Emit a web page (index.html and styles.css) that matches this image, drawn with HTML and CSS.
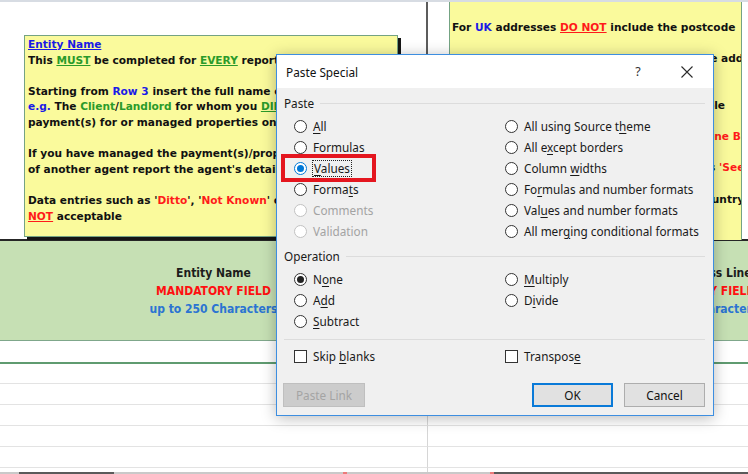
FILE: index.html
```html
<!DOCTYPE html>
<html>
<head>
<meta charset="utf-8">
<title>Paste Special</title>
<link rel="stylesheet" href="styles.css">
</head>
<body>
<div class="screen">
  <div class="topline"></div>
  <div class="sheet">
    <div class="cell left top"></div>
    <div class="cell right top"></div>

    <div class="cell left head">
      <div class="h-title">Entity Name</div>
      <div class="h-mand">MANDATORY FIELD</div>
      <div class="h-len">up to 250 Characters</div>
    </div>
    <div class="cell right head">
      <div class="h-title">Entity Address Line 1</div>
      <div class="h-mand">MANDATORY FIELD</div>
      <div class="h-len">up to 35 Characters</div>
    </div>

    <div class="cell left first"></div><div class="cell right first"></div>
    <div class="cell left r20"></div><div class="cell right r20"></div>
    <div class="cell left r21"></div><div class="cell right r21"></div>
    <div class="cell left r21"></div><div class="cell right r21"></div>
    <div class="cell left r21"></div><div class="cell right r21"></div>
    <div class="cell left r21"></div><div class="cell right r21"></div>
    <div class="cell left tail"></div><div class="cell right tail"></div>
  </div>
  <div class="bottombar">
    <span class="seg gap19"></span><span class="seg thumb w95"></span><span class="seg w229"></span><span class="seg mark"></span><span class="seg w143"></span><span class="seg mark"></span><span class="seg thumb grow"></span>
  </div>

  <div class="comment c-left">
    <div class="ln"><span class="blue ul">Entity Name</span></div>
    <div class="ln">This <span class="green ul">MUST</span> be completed for <span class="green ul">EVERY</span> reportable entity</div>
    <div class="ln">&nbsp;</div>
    <div class="ln">Starting from <span class="blue">Row 3</span> insert the full name of the entity</div>
    <div class="ln"><span class="blue">e.g.</span> The <span class="green">Client</span>/<span class="green">Landlord</span> for whom you <span class="green ul">DIRECTLY</span> collected</div>
    <div class="ln">payment(s) for or managed properties on behalf of.</div>
    <div class="ln">&nbsp;</div>
    <div class="ln">If you have managed the payment(s)/property on behalf</div>
    <div class="ln">of another agent report the agent's details.</div>
    <div class="ln">&nbsp;</div>
    <div class="ln">Data entries such as '<span class="red">Ditto</span>', '<span class="red">Not Known</span>' or '<span class="red">N/A</span>' are</div>
    <div class="ln"><span class="red ul">NOT</span> acceptable</div>
  </div>

  <div class="comment c-right">
    <div class="ln">For <span class="blue">UK</span> addresses <span class="red ul">DO NOT</span> include the postcode</div>
    <div class="ln">&nbsp;</div>
    <div class="ln">Insert the house numbers and streets of the address</div>
    <div class="ln">&nbsp;</div>
    <div class="ln">&nbsp;</div>
    <div class="ln">Ensure the address is, all entered, as a whole</div>
    <div class="ln">&nbsp;</div>
    <div class="ln">Do not enter word such as <span class="red">'Overseas' or 'None British'</span></div>
    <div class="ln">&nbsp;</div>
    <div class="ln">Do not use short-forms, or wording, such as <span class="red">'See Above'</span></div>
    <div class="ln">&nbsp;</div>
    <div class="ln">For non-UK addresses, also include their country</div>
  </div>

  <div class="dialog">
    <div class="titlebar">
      <span class="title">Paste Special</span>
      <span class="help">?</span>
      <span class="close"><svg width="12" height="12" viewBox="0 0 12 12"><path d="M0.5 0.5 L11.5 11.5 M11.5 0.5 L0.5 11.5" stroke="#2b2b2b" stroke-width="1.1" fill="none"/></svg></span>
    </div>
    <div class="dbody">
      <div class="glabel"><span>Paste</span><i class="rule"></i></div>
      <div class="opts six">
        <div class="opt"><span class="radio"></span><span class="txt"><u>A</u>ll</span></div>
        <div class="opt"><span class="radio"></span><span class="txt">Formulas</span></div>
        <div class="opt"><span class="radio on"></span><span class="txt focus"><u>V</u>alues</span></div>
        <div class="opt"><span class="radio"></span><span class="txt">Forma<u>t</u>s</span></div>
        <div class="opt dis"><span class="radio"></span><span class="txt">Comments</span></div>
        <div class="opt dis"><span class="radio"></span><span class="txt">Validation</span></div>
        <div class="opt"><span class="radio"></span><span class="txt">All using Source t<u>h</u>eme</span></div>
        <div class="opt"><span class="radio"></span><span class="txt">All e<u>x</u>cept borders</span></div>
        <div class="opt"><span class="radio"></span><span class="txt">Column <u>w</u>idths</span></div>
        <div class="opt"><span class="radio"></span><span class="txt">Fo<u>r</u>mulas and number formats</span></div>
        <div class="opt"><span class="radio"></span><span class="txt">Val<u>u</u>es and number formats</span></div>
        <div class="opt"><span class="radio"></span><span class="txt">All mer<u>g</u>ing conditional formats</span></div>
      </div>
      <div class="glabel op"><span>Operation</span><i class="rule"></i></div>
      <div class="opts three">
        <div class="opt"><span class="radio dot"></span><span class="txt">N<u>o</u>ne</span></div>
        <div class="opt"><span class="radio"></span><span class="txt">A<u>d</u>d</span></div>
        <div class="opt"><span class="radio"></span><span class="txt"><u>S</u>ubtract</span></div>
        <div class="opt"><span class="radio"></span><span class="txt"><u>M</u>ultiply</span></div>
        <div class="opt"><span class="radio"></span><span class="txt">D<u>i</u>vide</span></div>
      </div>
      <div class="sep"></div>
      <div class="opts one">
        <div class="opt"><span class="check"></span><span class="txt">Skip <u>b</u>lanks</span></div>
        <div class="opt"><span class="check"></span><span class="txt">Transpos<u>e</u></span></div>
      </div>
      <div class="buttons">
        <span class="btn disabled">Paste Link</span>
        <span class="btn primary">OK</span>
        <span class="btn">Cancel</span>
      </div>
    </div>
  </div>

  <div class="callout"></div>
</div>
</body>
</html>
```

FILE: styles.css
```css
* { box-sizing: border-box; }
html, body { margin: 0; padding: 0; }
body { background: #ffffff; }

.screen {
  position: relative;
  width: 748px;
  height: 474px;
  overflow: hidden;
  background: #ffffff;
}

.topline { height: 2px; background: #d7dce3; position: relative; z-index: 3; }

.sheet {
  display: grid;
  grid-template-columns: 428px 540px;
  grid-template-rows: 237px 102px 23px 20px 21px 21px 21px 21px 4px;
  width: 968px;
}

.cell { border-right: 1px solid #d6d6d6; }
.cell.right { border-right: none; }
.cell.top.left { border-right: 2px solid #5c5c5c; }

.head {
  background: #c6e0b4;
  border-top: 2px solid #262626;
  border-bottom: 1px solid #7fa78b;
  display: flex;
  flex-direction: column;
  align-items: center;
  justify-content: center;
  font-family: "DejaVu Sans Condensed", "DejaVu Sans", sans-serif;
  font-stretch: condensed;
  font-weight: bold;
  font-size: 12px;
  line-height: 18px;
  white-space: nowrap;
}
.cell.left.head { border-right: 1px solid #9fbf9f; }
.h-title { color: #1c1c1c; }
.h-mand { color: #ff1010; }
.h-len { color: #2b74d2; }

.first { border-bottom: 2px solid #5f9b70; }
.r20, .r21 { border-bottom: 1px solid #e3e3e3; }

.bottombar { display: flex; height: 2px; background: #c9c9c9; }
.seg { display: block; height: 2px; }
.gap19 { width: 19px; }
.w95 { width: 95px; }
.w229 { width: 229px; }
.w143 { width: 143px; }
.mark { width: 4px; background: #ec7a7a; }
.thumb { background: #5a5a5a; }
.grow { flex: 1; }

/* comment boxes */
.comment {
  position: absolute;
  background: #fafa9c;
  font-family: "DejaVu Sans", sans-serif;
  font-weight: bold;
  font-size: 10.6px;
  line-height: 15.6px;
  color: #111111;
  white-space: nowrap;
  overflow: hidden;
}
.c-left {
  left: 24px; top: 35px; width: 374px; height: 202px;
  border: 1px solid #74a383;
  padding: 1px 0 0 3px;
  box-shadow: 3px 3px 0 #151515;
  overflow: visible;
}
.c-left .ln { overflow: hidden; width: 368px; }
.c-right {
  left: 449px; top: 2px; width: 293px; height: 238px;
  border-left: 1px solid #74a383;
  border-right: 1px solid #74a383;
  padding: 18px 0 0 2px;
}
.ln { height: 15.6px; }
.blue { color: #1a1ae6; }
.green { color: #2a9a2a; }
.red { color: #ff1a1a; }
.ul { text-decoration: underline; }

/* dialog */
.dialog {
  position: absolute;
  left: 276px; top: 54px;
  width: 438px; height: 362px;
  border: 1px solid #3d8ee0;
  background: #f0f0f0;
  box-shadow: 0 2px 14px rgba(0,0,0,0.28);
  font-family: "Noto Sans", "Open Sans", sans-serif;
  font-size: 11.75px;
  color: #1a1a1a;
  z-index: 5;
}
.titlebar {
  height: 33px;
  background: #ffffff;
  display: flex;
  align-items: center;
  padding: 0 13px 0 9px;
}
.title { flex: 1; font-size: 11.8px; color: #111; }
.help { width: 20px; text-align: center; font-size: 12.5px; color: #333; margin-right: 26px; }
.close { width: 26px; height: 12px; display: flex; justify-content: center; }
.close svg { display: block; }

.dbody { padding: 6px 8px 8px 7px; }
.glabel {
  display: flex; align-items: center;
  height: 18px;
}
.glabel .rule { flex: 1; height: 1px; background: #dcdcdc; margin-left: 6px; }
.glabel.op { margin-top: 5.5px; }

.opts {
  display: grid;
  grid-template-columns: 211px 1fr;
  grid-auto-flow: column;
  padding-left: 10px;
  margin-top: 3.5px;
}
.opts.six { grid-template-rows: repeat(6, 21px); }
.opts.three { grid-template-rows: repeat(3, 21px); }
.opts.one { grid-template-rows: 21px; grid-auto-flow: row; margin-top: 5.5px; }

.opt { display: flex; align-items: center; }
.opt .txt { margin-left: 6px; white-space: nowrap; }
.opt u { text-underline-offset: 2px; }
.opt.dis .txt { color: #a3a3a3; }

.radio {
  width: 13px; height: 13px;
  border: 1px solid #333333;
  border-radius: 50%;
  background: #ffffff;
  display: flex; align-items: center; justify-content: center;
  flex: none;
}
.opt.dis .radio { border-color: #c2c2c2; }
.radio.on { border-color: #0078d7; }
.radio.on::after { content: ""; width: 7px; height: 7px; border-radius: 50%; background: #0078d7; }
.radio.dot::after { content: ""; width: 7px; height: 7px; border-radius: 50%; background: #222; }

.txt.focus {
  border: 1px dotted #222;
  padding: 0 1px;
  margin-left: 5px;
  line-height: 15px;
}

.check {
  width: 13px; height: 13px;
  border: 1px solid #333333;
  background: #ffffff;
  flex: none;
}

.sep { height: 1px; background: #dcdcdc; margin-top: 7.5px; }

.buttons {
  display: flex;
  margin-top: 16.5px;
  margin-left: -1px;
  gap: 11px;
}
.btn {
  width: 81px; height: 24px;
  display: flex; align-items: center; justify-content: center;
  background: #e1e1e1;
  border: 1px solid #adadad;
  font-size: 11.75px;
  color: #111;
}
.btn.disabled {
  width: 82px;
  background: #cccccc;
  border-color: #bfbfbf;
  color: #a4a4a4;
  margin-right: auto;
}
.btn.primary { border: 2px solid #0a7ad8; }

.callout {
  position: absolute;
  left: 281px; top: 154px;
  width: 95px; height: 28px;
  border: 4px solid #e4161f;
  z-index: 6;
}
```
